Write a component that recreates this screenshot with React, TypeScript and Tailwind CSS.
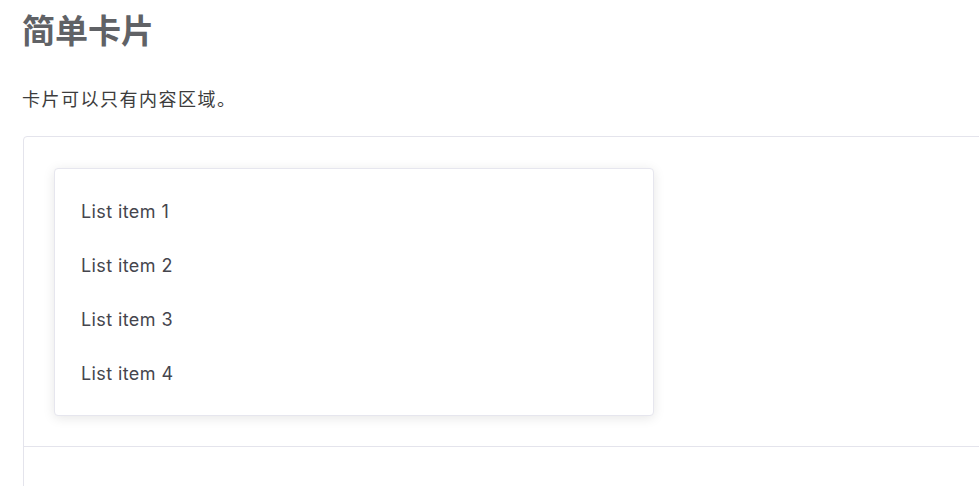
const items = ["List item 1", "List item 2", "List item 3", "List item 4"];

function SimpleCardDemo() {
  return (
    <div className="ml-[23px] mt-[24px] w-[1000px] rounded-tl-[4px] border border-[#e4e4ec] h-[400px]">
      <div className="px-[30px] pt-[31px] pb-[30px] border-b border-[#e4e4ec]">
        <div className="w-[600px] rounded-[4px] border border-[#e6e6ee] bg-white py-[15px] px-[26px] shadow-[0_2px_12px_rgba(0,0,0,0.1)]">
          {items.map((item) => (
            <div key={item} className="h-[54px] flex items-center text-[18px] tracking-[0.4px] text-[#45454d]">
              {item}
            </div>
          ))}
        </div>
      </div>
    </div>
  );
}

export default function App() {
  return (
    <div
      className="w-[979px] h-[486px] overflow-hidden bg-white"
      style={{ fontFamily: 'Inter, "Noto Sans CJK SC", sans-serif' }}
    >
      <div className="pl-[22px]">
        <h1 className="mt-[7px] text-[33px] leading-[48px] font-bold text-[#606266]">简单卡片</h1>
        <p className="mt-[33px] text-[18px] leading-[24px] tracking-[1.5px] text-[#3c3c3c]">
          卡片可以只有内容区域。
        </p>
      </div>
      <SimpleCardDemo />
    </div>
  );
}
